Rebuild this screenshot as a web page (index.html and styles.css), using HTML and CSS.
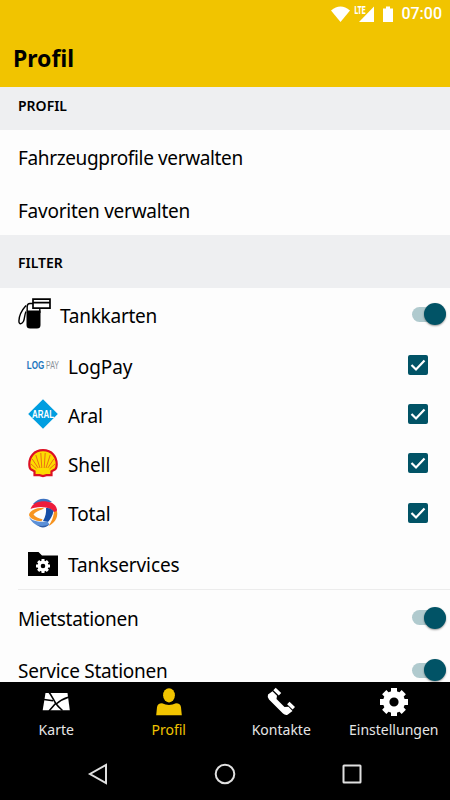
FILE: index.html
```
<!DOCTYPE html>
<html lang="de">
<head>
<meta charset="utf-8">
<title>Profil</title>
<link rel="stylesheet" href="styles.css">
</head>
<body>
<svg class="defs" width="0" height="0" aria-hidden="true">
  <symbol id="gear" viewBox="0 0 30 30">
    <circle cx="15" cy="15" r="7.800" fill="none" stroke="currentColor" stroke-width="6.400"/>
    <g fill="currentColor">
      <path d="M12 1h6v5h-6zM12 24h6v5h-6zM1 12h5v6H1zM24 12h5v6h-5z"/>
      <path transform="rotate(45 15 15)" d="M12 1.200h6v5h-6zM12 23.800h6v5h-6zM1.200 12h5v6h-5zM23.800 12h5v6h-5z"/>
    </g>
  </symbol>
  <symbol id="check" viewBox="0 0 20 20">
    <rect width="20" height="20" rx="2" fill="#015366"/>
    <path d="M3.500 10l4.500 4.500L16.500 5.500" fill="none" stroke="#fff" stroke-width="2.200"/>
  </symbol>
</svg>
<header class="appbar">
  <div class="status">
    <svg class="status-icons" viewBox="0 0 64 18" width="64" height="18">
      <g fill="#fff">
        <path d="M0 5.500Q9.500-2.500 19 5.500L9.500 17z"/>
        <path d="M43 1.500V17H28z"/>
        <path d="M52 3.500h3V1.500h4v2h3V17H52z"/>
      </g>
      <text class="lte" x="23.500" y="8.500" textLength="11" lengthAdjust="spacingAndGlyphs">LTE</text>
    </svg>
    <span class="clock">07:00</span>
  </div>
  <h1>Profil</h1>
</header>
<main>
  <h2 class="short">PROFIL</h2>
  <div class="row"><span class="tight">Fahrzeugprofile verwalten</span></div>
  <div class="row"><span>Favoriten verwalten</span></div>
  <h2>FILTER</h2>
  <div class="row">
    <svg class="pump" width="33" height="32" viewBox="0 0 33 32">
      <path d="M8.500 12.500h14V27q0 3.500-3.500 3.500h-7Q8.500 30.500 8.500 27z"/>
      <g fill="none" stroke="#000">
        <path stroke-width="1.700" d="M15 1.200h17v9H15zM15 4.700h17"/>
        <path stroke-width="1.400" d="M9.200 13V8.500Q9.200 5.500 12 5.500h3M21.800 10v5M8 7.500C4 12 1 18 .900 23c0 4 3.200 3 4.500.500 1.500-3 1-7 2.600-10"/>
      </g>
    </svg>
    <span>Tankkarten</span><i class="switch"></i>
  </div>
  <div class="row sub">
    <svg class="logo" width="34" height="30" viewBox="0 0 34 30">
      <text class="log" x=".8" y="18.500" textLength="17.500" lengthAdjust="spacingAndGlyphs">LOG</text>
      <text class="pay" x="20" y="18.500" textLength="13" lengthAdjust="spacingAndGlyphs">PAY</text>
    </svg>
    <span>LogPay</span><svg class="box"><use href="#check"/></svg>
  </div>
  <div class="row sub">
    <svg class="logo" width="34" height="30" viewBox="0 0 34 30">
      <path d="M17 .300L31.800 15 17 29.700 2.200 15z" fill="#009ee0"/>
      <text class="aral" x="6" y="18.500" textLength="22" lengthAdjust="spacingAndGlyphs">ARAL</text>
    </svg>
    <span>Aral</span><svg class="box"><use href="#check"/></svg>
  </div>
  <div class="row sub">
    <svg class="logo" width="34" height="30" viewBox="0 0 34 30">
      <path d="M17 2.200C8 2.200 3.300 9 3.300 16c0 3.500.400 4.500 1.500 5.200l3.700 2.200v3.800h5l3.500.800 3.500-.800h5v-3.800l3.700-2.200c1.100-.700 1.500-1.700 1.500-5.200C30.700 9 26 2.200 17 2.200z" fill="#fcdc00" stroke="#dd1023" stroke-width="2.200"/>
      <path d="M15.800 20L14.800 5M18.200 20l1-15M14 20L9.800 7M20 20l4.200-13M12.200 20L6.200 11M21.800 20l6-9M10.500 21L5 16M23.500 21L29 16" stroke="#e8541a" stroke-width=".8" fill="none"/>
    </svg>
    <span>Shell</span><svg class="box"><use href="#check"/></svg>
  </div>
  <div class="row sub">
    <svg class="logo" width="34" height="30" viewBox="0 0 34 30">
      <path d="M7 6C12-.500 21-1 26 4L17 6z" fill="#3d72c1"/>
      <path d="M4.500 11C6 6.500 10 3.600 15 3.400 23 3 29.500 5 31 11.500L30.500 17C27 11.500 22 9 15 9 10 9 7 10 4.500 11z" fill="#ed1c3c"/>
      <path d="M20 10c3 0 5.500 1 7.500 3-1 5-3 8-5.500 11l-5-1c2.500-4 3.500-9 3-13z" fill="#174ea6"/>
      <path d="M31 13c1.500 7-3 12.500-8.500 15 3-4 5-9 5.500-14z" fill="#f79420"/>
      <path d="M3 17C4 12 11 9.500 18.500 9.800L16 11.500c-4 1-7 3-8.500 5 2 2.500 5 4 9 4.800l-1 2C9 23 4 20.500 3 17z" fill="#f79420"/>
      <path d="M3 19c3 4 9 5.500 18.500 4.500l2 3C17 31 7 28 3 19z" fill="#5c90d7"/>
      <path d="M11 27c4 1.500 8 1.300 12-.500-3 3.500-8 4-12 .500z" fill="#315ea8"/>
    </svg>
    <span>Total</span><svg class="box"><use href="#check"/></svg>
  </div>
  <div class="row sub services">
    <svg class="logo" width="34" height="30" viewBox="0 0 34 30">
      <path d="M2 3h10.500l3.500 3.500h16V27H2z"/>
      <svg x="9.500" y="9.500" width="15" height="15" color="#fff"><use href="#gear"/></svg>
    </svg>
    <span>Tankservices</span>
  </div>
  <div class="row station"><span>Mietstationen</span><i class="switch"></i></div>
  <div class="row station"><span>Service Stationen</span><i class="switch"></i></div>
</main>
<nav class="tabs">
  <a>
    <svg width="30" height="30" viewBox="0 0 30 30"><path fill="#fff" d="M4.500 6h22l2.300 17.200H1.700z"/><path fill="none" stroke="#000" stroke-width="1.600" d="M7.500 4.500C11 9 12 12 14.500 16c2 3 4 5 7 7.500M3 12.500l9 1.200M14.500 17.500C19 13.500 23 11.500 28 10M14.500 16.500L8 24"/></svg>
    <span>Karte</span>
  </a>
  <a class="active">
    <svg width="30" height="30" viewBox="0 0 30 30"><g fill="currentColor"><ellipse cx="15" cy="8.300" rx="5.900" ry="7.100"/><path d="M8 16.200q7 3.600 14 0 4.500 0 5 4l.8 8H2.200L3 20.200q.5-4 5-4z"/></g></svg>
    <span>Profil</span>
  </a>
  <a>
    <svg width="30" height="30" viewBox="0 0 30 30"><path fill="#fff" d="M2 7.500L6.500 4.200 11 8.700 10.500 12l8 8 4-.300 4 4.300L21.500 27.800q-2.500.700-4.500-1.300L3 12.500Q1 10 2 7.500zM9.700 .800l5.500 5.200-2.400 2.400-5.500-5.200zM23.500 14.800l5.500 5.200-2.400 2.400-5.500-5.200z"/></svg>
    <span>Kontakte</span>
  </a>
  <a>
    <svg width="30" height="30"><use href="#gear"/></svg>
    <span>Einstellungen</span>
  </a>
</nav>
<footer class="sysnav">
  <svg width="24" height="24" viewBox="0 0 24 24"><path d="M20 3v18L4 12z"/></svg>
  <svg width="24" height="24" viewBox="0 0 24 24"><circle cx="12" cy="12" r="9.300"/></svg>
  <svg width="24" height="24" viewBox="0 0 24 24"><rect x="3.500" y="3.500" width="17" height="17" rx=".5"/></svg>
</footer>
</body>
</html>
```
FILE: styles.css
```
* { box-sizing: border-box; }
body {
  margin: 0;
  width: 450px;
  height: 800px;
  display: flex;
  flex-direction: column;
  overflow: hidden;
  background: #fdfdfd;
  color: #000;
  font-family: "Noto Sans", "Open Sans", sans-serif;
}
.defs { display: none; }
.appbar { height: 87px; flex: none; background: #f1c400; }
.status {
  height: 27px;
  padding: 0 8px 0 0;
  display: flex;
  justify-content: flex-end;
  align-items: center;
}
.status-icons { margin: 0 6px 0 0; overflow: visible; }
.lte { font: 900 10.500px Roboto, sans-serif; fill: #fff; }
.clock { font: 500 16px/27px Roboto, sans-serif; color: #fff; }
h1 { margin: 13px 0 0 13px; font-size: 23px; line-height: 36px; font-weight: 700; }
main { flex: 1; min-height: 0; overflow: hidden; }
h2 {
  margin: 0;
  height: 53px;
  padding: 1px 18px 0;
  background: #eeeff1;
  font-size: 14px;
  line-height: 53px;
  font-weight: 600;
}
h2.short { height: 43px; line-height: 35px; }
.row {
  height: 52.500px;
  padding: 0 4px 0 18px;
  display: flex;
  align-items: center;
  font-size: 19px;
  letter-spacing: -.25px;
}
.row span { white-space: nowrap; padding-top: 4px; }
.row .tight { letter-spacing: -.36px; }
.row.station span { padding-top: 2px; }
.pump { margin-right: 9px; }
.row.sub { height: 49.200px; padding: 0 22px 0 26px; letter-spacing: -.1px; }
.row.sub span { padding-top: 3px; }
.row.services { height: 54px; position: relative; }
.row.services span { padding-top: 1px; }
.row.services::after {
  content: "";
  position: absolute;
  left: 18px;
  right: 0;
  bottom: 1px;
  border-bottom: 1px solid #ececec;
}
.logo { margin-right: 8px; letter-spacing: 0; overflow: visible; }
.log { font: bold 10px "Liberation Sans", sans-serif; fill: #1b75bc; }
.pay { font: 10px "Liberation Sans", sans-serif; fill: #8b929a; }
.aral { font: bold 10px "Liberation Sans", sans-serif; fill: #fff; }
.box { width: 20px; height: 20px; margin-left: auto; }
.switch {
  position: relative;
  width: 34px;
  height: 15px;
  margin-left: auto;
  border-radius: 8px;
  background: #b0cace;
}
.switch::after {
  content: "";
  position: absolute;
  right: 0;
  top: -3.500px;
  width: 22px;
  height: 22px;
  border-radius: 50%;
  background: #015366;
  box-shadow: 0 1px 2px rgba(0, 0, 0, .4);
}
.tabs {
  height: 66px;
  flex: none;
  display: grid;
  grid-template-columns: repeat(4, 1fr);
  background: #000;
  color: #fff;
}
.tabs a {
  display: flex;
  flex-direction: column;
  align-items: center;
  padding-top: 5px;
  font-size: 14px;
  line-height: 26px;
}
.tabs a.active { color: #f1c400; }
.tabs span { color: #e6e6e6; white-space: nowrap; }
.tabs .active span { color: #f1c400; }
.sysnav {
  height: 52px;
  flex: none;
  display: flex;
  justify-content: center;
  gap: 103px;
  background: #000;
  padding-top: 14px;
}
.sysnav svg { fill: none; stroke: #e0e0e0; stroke-width: 2; }
```
